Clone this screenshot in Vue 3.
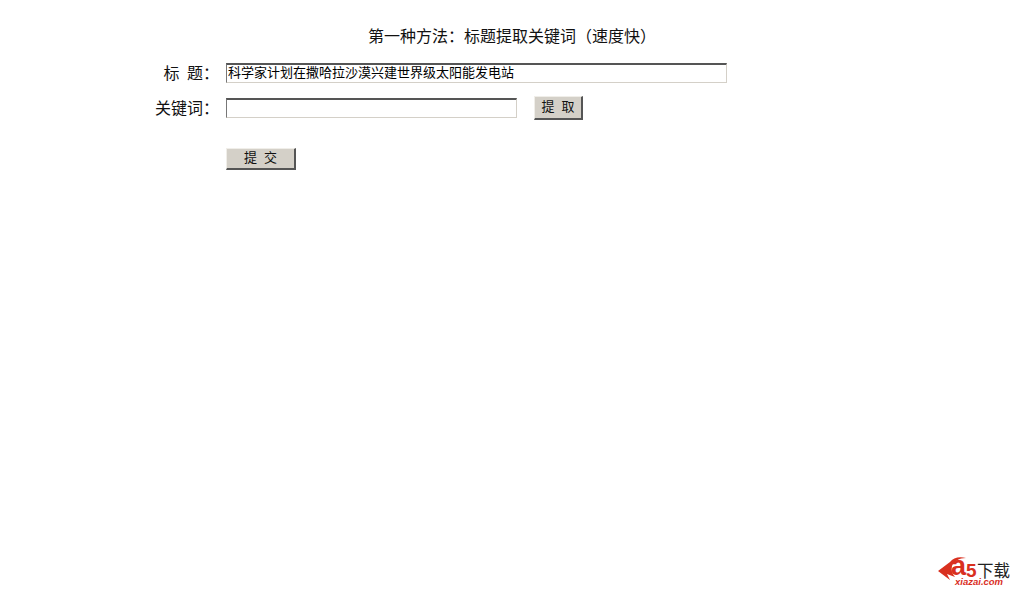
<script setup>
const title = '第一种方法：标题提取关键词（速度快）'
const headline = '科学家计划在撒哈拉沙漠兴建世界级太阳能发电站'
</script>

<template>
  <main class="page">
    <h1 class="title">{{ title }}</h1>
    <form class="form" @submit.prevent>
      <div class="row row-title">
        <label class="label spaced" for="t">标 题：</label>
        <input id="t" class="field wide" :value="headline" />
      </div>
      <div class="row row-key">
        <label class="label" for="k">关键词：</label>
        <input id="k" class="field narrow" />
        <button type="button" class="btn extract">提 取</button>
      </div>
      <div class="row row-submit">
        <button type="submit" class="btn submit">提 交</button>
      </div>
    </form>
    <svg class="logo" viewBox="0 0 76 32" width="76" height="32" role="img" aria-label="A5下载">
      <path d="M3 17 L15 8 C18 4 24 2 31 4 C24 4 19 7 17 12 C16 16 17 20 20 23 L12 20 L15 26 Z" fill="#d9301f" />
      <text x="16" y="21" class="a">a</text>
      <text x="31" y="23" class="five">5</text>
      <text x="42" y="23" class="cn">下载</text>
      <text x="20" y="31" class="url">xiazai.com</text>
    </svg>
  </main>
</template>

<style scoped>
.page {
  height: 592px;
  display: flex;
  flex-direction: column;
  box-sizing: border-box;
  padding: 26px 13px 6px 0;
  background: #fff;
  color: #111;
  font-family: "Noto Sans CJK SC", "Liberation Sans", sans-serif;
  overflow: hidden;
}
.title {
  margin: 0 0 0 13px;
  font-size: 16px;
  font-weight: 400;
  line-height: 18px;
  text-align: center;
}
.form {
  margin-top: 19px;
  display: flex;
  flex-direction: column;
}
.row {
  display: flex;
  align-items: center;
}
.row-title { height: 20px; }
.row-key { height: 24px; margin-top: 13px; }
.row-submit { height: 22px; margin-top: 28px; padding-left: 226px; }
.label {
  width: 219px;
  margin-right: 7px;
  padding-bottom: 2px;
  flex: none;
  font-size: 16px;
  text-align: right;
  white-space: pre;
}
.spaced { word-spacing: 4px; }
.field {
  box-sizing: border-box;
  height: 20px;
  padding: 0 2px 4px 1px;
  background: #fff;
  border-style: solid;
  border-width: 2px 1px 1px 1px;
  border-color: #555 #d4d0c8 #d4d0c8 #777;
  font-family: inherit;
  font-size: 13px;
  line-height: 13px;
  color: #000;
  outline: none;
}
.wide { width: 501px; }
.narrow { width: 291px; }
.btn {
  box-sizing: border-box;
  padding: 0 0 4px;
  background: #d4d0c8;
  border-style: solid;
  border-width: 1px 2px 2px 1px;
  border-color: #f0eee9 #555 #555 #f0eee9;
  font-family: inherit;
  font-size: 13px;
  line-height: 13px;
  color: #111;
  word-spacing: 4px;
}
.extract { width: 49px; height: 24px; margin-left: 17px; }
.submit { width: 70px; height: 22px; }
.logo {
  margin-top: auto;
  align-self: flex-end;
  flex: none;
  overflow: visible;
}
.a {
  font: 700 27px "Liberation Sans", sans-serif;
  fill: #d9301f;
}
.five {
  font: 700 19px "Liberation Sans", sans-serif;
  fill: #d9301f;
}
.cn {
  font: 400 16.5px "Noto Sans CJK SC", sans-serif;
  fill: #222;
}
.url {
  font: italic 700 9.5px "Liberation Sans", sans-serif;
  fill: #d9301f;
}
</style>
